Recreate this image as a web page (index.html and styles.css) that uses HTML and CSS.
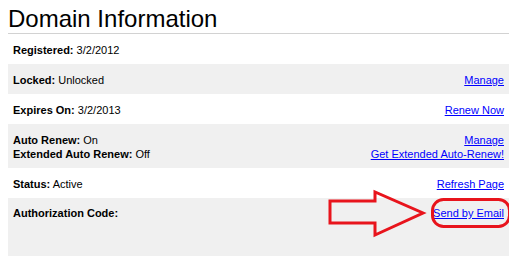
FILE: index.html
```html
<!DOCTYPE html>
<html lang="en">
<head>
    <meta charset="UTF-8">
    <title>Domain Information</title>
    <link rel="stylesheet" href="styles.css">
</head>
<body>
    <h1>Domain Information</h1>
    <div class="info-table">
        <div class="row">
            <div><b>Registered:</b> 3/2/2012</div>
        </div>
        <div class="row alt">
            <div><b>Locked:</b> Unlocked</div>
            <div class="actions"><a href="#">Manage</a></div>
        </div>
        <div class="row">
            <div><b>Expires On:</b> 3/2/2013</div>
            <div class="actions"><a href="#">Renew Now</a></div>
        </div>
        <div class="row alt">
            <div>
                <b>Auto Renew:</b> On<br>
                <b>Extended Auto Renew:</b> Off
            </div>
            <div class="actions">
                <a href="#">Manage</a><br>
                <a href="#">Get Extended Auto-Renew!</a>
            </div>
        </div>
        <div class="row">
            <div><b>Status:</b> Active</div>
            <div class="actions"><a href="#">Refresh Page</a></div>
        </div>
        <div class="row alt auth-row">
            <div><b>Authorization Code:</b></div>
            <div class="actions"><a href="#">Send by Email</a></div>
            <!-- red arrow + circle pointing at the link -->
            <svg class="callout" width="509" height="58" viewBox="0 0 509 58">
                <polygon points="322,3 367,3 367,-6 415,15 367,37 367,25 322,25"
                         fill="none" stroke="#e8141c" stroke-width="3" stroke-linejoin="miter"/>
                <rect x="424.5" y="1.5" width="77" height="27" rx="11" ry="11"
                      fill="none" stroke="#e8141c" stroke-width="3"/>
            </svg>
        </div>
    </div>
</body>
</html>
```

FILE: styles.css
```css
body {
    font-family: "Liberation Sans", Arial, sans-serif;
    margin: 0 8px;
    color: #000;
    background-color: #fff;
}

h1 {
    font-size: 24px;
    font-weight: normal;
    margin: 0;
    padding-top: 6px;
    line-height: 26px;
    height: 27px;
    border-bottom: 1px solid #d2d2d2;
}

.info-table {
    font-size: 11px;
    line-height: 14px;
}

.row {
    display: flex;
    justify-content: space-between;
    padding: 9px 5px 7px;
}

.row.alt {
    background-color: #f0f0f0;
}

.actions {
    text-align: right;
}

.actions a {
    color: #0000ff;
}

.auth-row {
    position: relative;
    padding-top: 8px;
    height: 43px;
}

.callout {
    position: absolute;
    left: 0;
    top: 0;
    overflow: visible;
}
```
